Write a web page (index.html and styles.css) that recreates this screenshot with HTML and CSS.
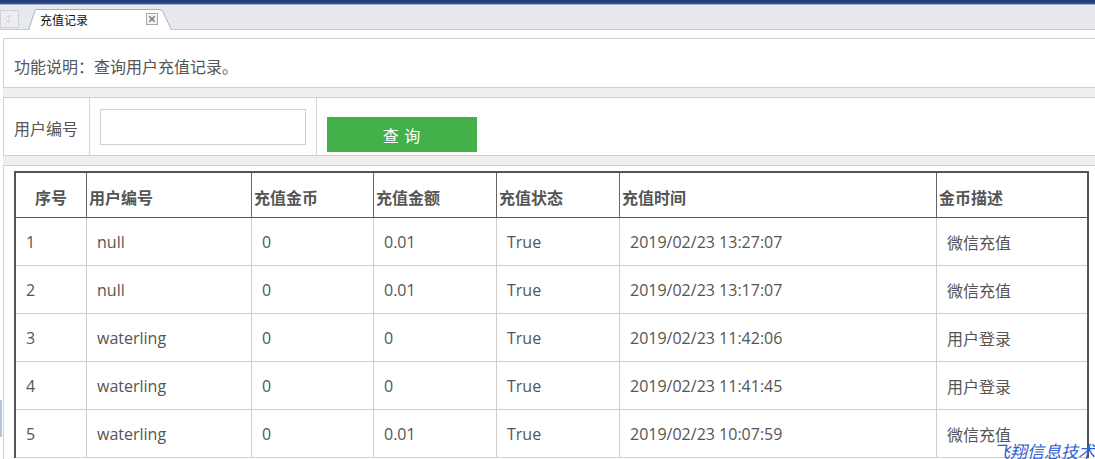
FILE: index.html
```html
<!DOCTYPE html>
<html lang="zh-CN">
<head>
<meta charset="utf-8">
<title>充值记录</title>
<link rel="stylesheet" href="styles.css">
</head>
<body>
<div class="topbar"></div>
<div class="tabstrip">
  <div class="scroll-left">
    <svg width="19" height="18" viewBox="0 0 19 18"><rect x="0.5" y="0.5" width="18" height="17" fill="#eceef2" stroke="#cdd1d8"/><path d="M9 5.5 L5.5 9 L9 12.5 Z" fill="#fff" stroke="#b9bec8" stroke-width="0.8"/></svg>
  </div>
  <div class="tab">
    <svg class="tab-bg" width="144" height="21" viewBox="0 0 144 21"><path d="M0.5 21 L7 1.5 Q7.8 0.5 9 0.5 L131 0.5 Q133 0.5 134.5 2 L143.5 21" fill="#fff" stroke="#a9b1c2"/></svg>
    <span class="tab-title">充值记录</span>
    <span class="tab-close">
      <svg width="12" height="12" viewBox="0 0 12 12"><rect x="0.5" y="0.5" width="11" height="11" fill="#f4f4f4" stroke="#a7a7a7"/><path d="M3.3 3.3 L8.7 8.7 M8.7 3.3 L3.3 8.7" stroke="#7a7a7a" stroke-width="1.6"/></svg>
    </span>
  </div>
</div>

<div class="content">
  <div class="panel desc">功能说明：查询用户充值记录。</div>
  <div class="gap"></div>
  <div class="panel search">
    <div class="cell label">用户编号</div>
    <div class="cell field"><input class="text-input" type="text"></div>
    <div class="cell action"><button class="btn-query">查 询</button></div>
  </div>
  <div class="gap"></div>
  <div class="panel list">
    <table class="grid">
      <colgroup>
        <col class="c1"><col class="c2"><col class="c3"><col class="c4"><col class="c5"><col class="c6"><col class="c7">
      </colgroup>
      <thead>
        <tr>
          <th class="center">序号</th>
          <th>用户编号</th>
          <th>充值金币</th>
          <th>充值金额</th>
          <th>充值状态</th>
          <th>充值时间</th>
          <th>金币描述</th>
        </tr>
      </thead>
      <tbody>
        <tr><td>1</td><td>null</td><td>0</td><td>0.01</td><td>True</td><td>2019/02/23 13:27:07</td><td>微信充值</td></tr>
        <tr><td>2</td><td>null</td><td>0</td><td>0.01</td><td>True</td><td>2019/02/23 13:17:07</td><td>微信充值</td></tr>
        <tr><td>3</td><td>waterling</td><td>0</td><td>0</td><td>True</td><td>2019/02/23 11:42:06</td><td>用户登录</td></tr>
        <tr><td>4</td><td>waterling</td><td>0</td><td>0</td><td>True</td><td>2019/02/23 11:41:45</td><td>用户登录</td></tr>
        <tr><td>5</td><td>waterling</td><td>0</td><td>0.01</td><td>True</td><td>2019/02/23 10:07:59</td><td>微信充值</td></tr>
      </tbody>
    </table>
  </div>
</div>

<div class="side-mark"></div>
<div class="watermark">飞翔信息技术</div>
</body>
</html>
```

FILE: styles.css
```css
html, body {
  margin: 0;
  padding: 0;
  overflow: hidden;
  background: #fff;
}
body {
  width: 1095px;
  height: 459px;
  position: relative;
  font-family: "Open Sans", "Noto Sans CJK SC", sans-serif;
  color: #555;
}
.topbar {
  height: 4px;
  background: linear-gradient(#1f3570, #34518f);
  border-bottom: 1px solid #9db0d6;
}
.tabstrip {
  height: 24px;
  background: #e8e9ee;
  border-bottom: 1px solid #c6c9d1;
  display: flex;
  align-items: flex-end;
  position: relative;
}
.scroll-left {
  width: 19px;
  height: 18px;
  align-self: flex-start;
  margin-top: 5px;
  line-height: 0;
}
.tab {
  position: relative;
  width: 144px;
  height: 21px;
  margin-left: 9px;
  margin-bottom: -1px;
  display: flex;
  align-items: center;
}
.tab-bg {
  position: absolute;
  left: 0;
  top: 0;
}
.tab-title {
  position: relative;
  margin-left: 12px;
  font-size: 12px;
  color: #111;
  font-family: "Noto Sans CJK SC", sans-serif;
  line-height: 14px;
}
.tab-close {
  position: relative;
  margin-left: 58px;
  line-height: 0;
  margin-top: -1px;
}
.content {
  margin: 8px 0 0 3px;
  width: 1110px;
}
.panel {
  background: #fff;
  border: 1px solid #cfcfcf;
}
.gap {
  height: 9px;
  background: #f0efeb;
}
.desc {
  height: 31px;
  padding: 17px 0 0 10px;
  font-size: 16px;
  line-height: 22px;
}
.search {
  display: flex;
  height: 57px;
}
.cell {
  height: 57px;
  box-sizing: border-box;
}
.label {
  width: 86px;
  border-right: 1px solid #d6d6d6;
  padding: 20px 0 0 10px;
  font-size: 16px;
  line-height: 22px;
}
.field {
  width: 227px;
  border-right: 1px solid #d6d6d6;
  padding: 11px 0 0 10px;
}
.text-input {
  display: block;
  box-sizing: border-box;
  width: 206px;
  height: 36px;
  margin: 0;
  border: 1px solid #d0d0d0;
  background: #fff;
  outline: none;
}
.action {
  padding: 19px 0 0 10px;
}
.btn-query {
  display: block;
  width: 150px;
  height: 35px;
  margin: 0;
  border: none;
  background: #43b14a;
  color: #fff;
  font-family: "Noto Sans CJK SC", sans-serif;
  font-size: 16px;
  letter-spacing: 1px;
  padding: 0;
}
.list {
  border-bottom: none;
  padding: 5px 0 0 10px;
  height: 300px;
}
.grid {
  border-collapse: separate;
  border-spacing: 0;
  table-layout: fixed;
  width: 1075px;
  border: 2px solid #555;
  border-bottom: none;
}
.c1 { width: 71px; }
.c2 { width: 165px; }
.c3 { width: 122px; }
.c4 { width: 123px; }
.c5 { width: 123px; }
.c6 { width: 317px; }
.c7 { width: 150px; }
.grid th {
  height: 45px;
  box-sizing: border-box;
  padding: 3px 0 0 2px;
  text-align: left;
  font-weight: bold;
  font-size: 16px;
  color: #555;
  border-right: 1px solid #666;
  border-bottom: 1px solid #555;
  font-family: "Noto Sans CJK SC", sans-serif;
}
.grid th.center {
  text-align: center;
  padding-left: 0;
}
.grid td {
  height: 48px;
  box-sizing: border-box;
  padding: 0 0 0 10px;
  font-size: 16px;
  color: #555;
  border-right: 1px solid #cfcfcf;
  border-bottom: 1px solid #cfcfcf;
}
.grid th:last-child,
.grid td:last-child {
  border-right: none;
}
.side-mark {
  position: absolute;
  left: 0;
  top: 400px;
  width: 2px;
  height: 37px;
  background: #b4c2dd;
}
.watermark {
  position: absolute;
  left: 993px;
  top: 440px;
  font-size: 17px;
  font-style: italic;
  color: #2f62cf;
  font-family: "Noto Sans CJK SC", sans-serif;
  line-height: 22px;
  white-space: nowrap;
}
```
